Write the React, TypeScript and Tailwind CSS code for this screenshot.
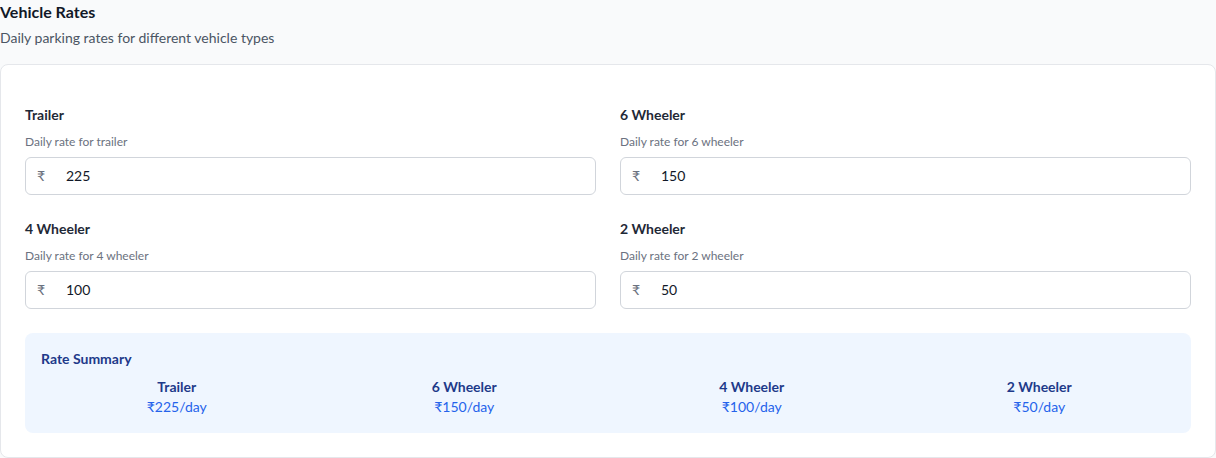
import React from "react";

const rates = [
  { name: "Trailer", desc: "Daily rate for trailer", value: 225 },
  { name: "6 Wheeler", desc: "Daily rate for 6 wheeler", value: 150 },
  { name: "4 Wheeler", desc: "Daily rate for 4 wheeler", value: 100 },
  { name: "2 Wheeler", desc: "Daily rate for 2 wheeler", value: 50 },
];

export default function App() {
  return (
    <div
      className="min-h-[458px] bg-[#f9fafb]"
      style={{ fontFamily: "Lato, 'Noto Sans', sans-serif" }}
    >
      <div>
        <h2 className="text-base leading-6 font-bold text-[#111827]">Vehicle Rates</h2>
        <p className="mt-1 text-sm leading-5 text-[#4b5563]">
          Daily parking rates for different vehicle types
        </p>
      </div>
      <div className="mt-4 rounded-lg border border-[#e5e7eb] bg-white px-6 pt-[42px] pb-6">
        <div className="grid grid-cols-2 gap-x-6 gap-y-[26px]">
          {rates.map((r) => (
            <div key={r.name}>
              <div className="text-sm leading-4 font-bold text-[#1f2937]">{r.name}</div>
              <div className="mt-[11px] text-xs leading-4 text-[#6b7280]">{r.desc}</div>
              <div className="relative mt-[7px]">
                <span className="absolute left-3 top-1/2 -translate-y-1/2 text-sm text-[#6b7280]">₹</span>
                <div className="flex h-[38px] items-center rounded-md border border-[#d1d5db] bg-white pl-10 text-sm text-[#111827]">
                  {r.value}
                </div>
              </div>
            </div>
          ))}
        </div>
        <div className="mt-6 rounded-lg bg-[#eff6ff] p-4">
          <div className="text-sm leading-5 font-bold text-[#1e3a8a]">Rate Summary</div>
          <div className="mt-2 grid grid-cols-4 gap-4">
            {rates.map((r) => (
              <div key={r.name} className="text-center">
                <div className="text-sm leading-5 font-bold text-[#1e3a8a]">{r.name}</div>
                <div className="text-sm leading-5 text-[#2563eb]">₹{r.value}/day</div>
              </div>
            ))}
          </div>
        </div>
      </div>
    </div>
  );
}
